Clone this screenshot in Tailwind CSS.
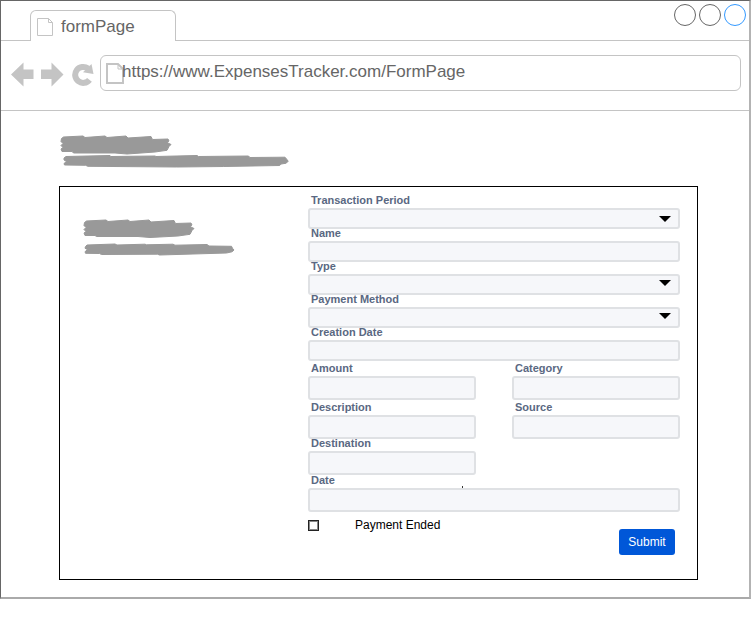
<!DOCTYPE html>
<html lang="en">
<head>
<meta charset="utf-8">
<title>formPage</title>
<script src="https://cdn.jsdelivr.net/npm/@tailwindcss/browser@4"></script>
</head>
<body class="bg-white font-['Liberation_Sans',Arial,sans-serif]">
<div class="border border-[#666] border-r-2 border-r-[#b3b3b3] border-b-2 border-b-[#aaa] pb-[17px]">

  <!-- Tab strip -->
  <header class="flex items-end justify-between border-b border-[#c4c4c4] pl-[29px] pr-[3px] pt-[3px] h-10">
    <div class="-mb-px flex h-[31px] w-[146px] items-center gap-[7px] rounded-t-md border border-b-0 border-[#c4c4c4] bg-white pl-[6px] pt-px">
      <svg class="h-5 w-[17px]" viewBox="0 0 17 20" fill="none" stroke="#c4c4c4" aria-hidden="true"><path d="M.5 1.5h11l4 4v13H.5zM11.500 1.500v4h4"/></svg>
      <span class="text-[17px] leading-5 text-[#666]">formPage</span>
    </div>
    <div class="flex gap-[3px] self-start">
      <button aria-label="Minimize" class="size-[22px] rounded-full border border-[#666]"></button>
      <button aria-label="Maximize" class="size-[22px] rounded-full border border-[#666]"></button>
      <button aria-label="Close" class="size-[22px] rounded-full border border-[#3399ff]"></button>
    </div>
  </header>

  <!-- Navigation bar -->
  <nav class="flex items-start border-b border-[#c4c4c4] pb-[19px] pl-[10px] pr-2 pt-[14px]">
    <button aria-label="Back" class="mt-[7px]"><svg class="h-[25px] w-[23px]" viewBox="0 0 23 25" fill="#c4c4c4"><path d="M0 12.500 12.500 .5v7h10v9.500h-10V24.500z"/></svg></button>
    <button aria-label="Forward" class="ml-[7px] mt-[7px]"><svg class="h-[25px] w-[23px]" viewBox="0 0 23 25" fill="#c4c4c4"><path d="M22.500 12.500 10.500 .5v7H0V17h10.500v7.500z"/></svg></button>
    <button aria-label="Reload" class="ml-2 mt-2"><svg class="h-[23px] w-[22px]" viewBox="0 0 22 23"><path d="M16 5.500A8 8 0 1 0 17.500 16.800" fill="none" stroke="#c4c4c4" stroke-width="6"/><path d="m19.500 1 2 10-10.500-1.800z" fill="#c4c4c4"/></svg></button>
    <div class="ml-[6px] flex h-9 flex-1 items-start rounded-md border border-[#c4c4c4] pl-[5px]">
      <svg class="mt-[7px] h-[21px] w-[18px]" viewBox="0 0 18 21" fill="none" stroke="#c4c4c4" stroke-width="2" aria-hidden="true"><path d="M1 1h11l5 5v14H1z"/><path d="M12 1v5h5" stroke-width="1"/></svg>
      <input aria-label="Address" value="https://www.ExpensesTracker.com/FormPage" class="-ml-[2px] mt-[6px] h-5 min-w-0 flex-1 bg-transparent text-[17px] leading-5 text-[#666] outline-none">
    </div>
  </nav>

  <main class="pl-[58px] pr-[51px] pt-6">
    <svg class="ml-px h-[32px] w-[230px] overflow-visible" viewBox="0 0 230 32" fill="#999" stroke="#999" stroke-linejoin="round" aria-label="Page heading" role="img">
      <path d="M1.500 3.500 3.500 2 23 1l2 1.500L45 1l2 1.500L66 1l2 2 23-1.500 1.500 3L108 4l1 2-2 1.500 4 2-2 2-2 3.800L95 17l-28 2-12-1H13.500L12 16.500H2L1 14l2-1.500L1 10.500l2-2-2-2z"/>
      <path d="m4 23 2-1.500 44-1 1 1 44-.5 1 .5 41-1 1.500 1 50-.5 1.500 1.500 35-.3 1.700 2 1.500 2-2 2-5 .8-1.500 1.500-56 1-47 .5-89-.7-2-1L4.500 30l-.5-1.500L6.500 26.500 4 25z"/>
    </svg>

    <section class="mt-[19px] flex border border-black pb-6 pr-[17px] pt-[9px]">
      <div class="w-[248px] shrink-0 pl-[23px] pt-[23px]">
        <svg class="h-9 w-[152px] overflow-visible" viewBox="0 0 152 36" fill="#999" stroke="#999" stroke-linejoin="round" aria-label="Form heading" role="img">
          <path d="M1.500 3.500 3.500 2 23 1l2 1.500L45 1l2 1.500L66 1l2 2 23-1.500 1.500 3L108 4l1 2-2 1.500 4 2-2 2-2 3.800L95 17l-28 1.500-12-1H13.500L12 16.500H2L1 14l2-1.500L1 10.500l2-2-2-2z"/>
          <path d="m2.500 27.500 1.500-1.500 28-1 2 1 28-.8 1.500.6 26.500-.6 2 1 32-.7 2 1.500 22.500.3 1 2 1.500 1.700-2 1.800-5.500 1.200-67 2-2-.8-56 .3-2-1-14-.2-.5-1.600 2.500-2-2.500-1.500z"/>
        </svg>
      </div>

      <form class="min-w-0 flex-1 text-[11px] leading-[9px] text-[#5a6882]">
        <div class="flex flex-col font-bold">
          <label for="period" class="pb-[3px] pl-[3px]">Transaction Period</label>
          <div class="relative h-[21px]">
            <select id="period" class="block h-full w-full appearance-none rounded-[3px] border-2 border-[#dfe1e4] bg-[#f6f7fa]"></select>
            <svg class="pointer-events-none absolute right-[9px] top-2 h-[6px] w-3" viewBox="0 0 12 6"><path d="M0 0h12L6 6z"/></svg>
          </div>
          <label for="name" class="pb-[3px] pl-[3px]">Name</label>
          <input id="name" class="h-[21px] w-full rounded-[3px] border-2 border-[#dfe1e4] bg-[#f6f7fa]">
          <label for="type" class="pb-[3px] pl-[3px]">Type</label>
          <div class="relative h-[21px]">
            <select id="type" class="block h-full w-full appearance-none rounded-[3px] border-2 border-[#dfe1e4] bg-[#f6f7fa]"></select>
            <svg class="pointer-events-none absolute right-[9px] top-[6px] h-[6px] w-3" viewBox="0 0 12 6"><path d="M0 0h12L6 6z"/></svg>
          </div>
          <label for="method" class="pb-[3px] pl-[3px]">Payment Method</label>
          <div class="relative h-[21px]">
            <select id="method" class="block h-full w-full appearance-none rounded-[3px] border-2 border-[#dfe1e4] bg-[#f6f7fa]"></select>
            <svg class="pointer-events-none absolute right-[9px] top-[6px] h-[6px] w-3" viewBox="0 0 12 6"><path d="M0 0h12L6 6z"/></svg>
          </div>
          <label for="created" class="pb-[3px] pl-[3px]">Creation Date</label>
          <input id="created" class="h-[21px] w-full rounded-[3px] border-2 border-[#dfe1e4] bg-[#f6f7fa]">
        </div>

        <div class="mt-[3px] grid grid-cols-2 gap-x-9 gap-y-[3px] font-bold">
          <div class="flex flex-col">
            <label for="amount" class="pb-[3px] pl-[3px]">Amount</label>
            <input id="amount" class="h-6 w-full rounded-[3px] border-2 border-[#dfe1e4] bg-[#f6f7fa]">
          </div>
          <div class="flex flex-col">
            <label for="category" class="pb-[3px] pl-[3px]">Category</label>
            <input id="category" class="h-6 w-full rounded-[3px] border-2 border-[#dfe1e4] bg-[#f6f7fa]">
          </div>
          <div class="flex flex-col">
            <label for="description" class="pb-[3px] pl-[3px]">Description</label>
            <input id="description" class="h-6 w-full rounded-[3px] border-2 border-[#dfe1e4] bg-[#f6f7fa]">
            <label for="destination" class="pb-[3px] pl-[3px]">Destination</label>
            <input id="destination" class="h-6 w-full rounded-[3px] border-2 border-[#dfe1e4] bg-[#f6f7fa]">
          </div>
          <div class="flex flex-col">
            <label for="source" class="pb-[3px] pl-[3px]">Source</label>
            <input id="source" class="h-6 w-full rounded-[3px] border-2 border-[#dfe1e4] bg-[#f6f7fa]">
          </div>
        </div>

        <div class="relative mt-px flex flex-col font-bold">
          <label for="date" class="pb-[3px] pl-[3px]">Date</label>
          <input id="date" class="h-6 w-full rounded-[3px] border-2 border-[#dfe1e4] bg-[#f6f7fa]">
          <span class="absolute left-[154px] top-[10px] h-[2px] w-px bg-[#333]"></span>
        </div>

        <div class="flex justify-between pr-[5px]">
          <div class="flex items-center self-start pt-[6px]">
            <input id="ended" type="checkbox" class="size-[11px] appearance-none border border-[#222] bg-white outline-1 -outline-offset-2 outline-[#888] checked:bg-[#444]">
            <label for="ended" class="pl-9 text-xs leading-[14px] text-black">Payment Ended</label>
          </div>
          <button type="submit" class="mt-[17px] h-[26px] w-14 rounded-[3px] bg-[#0057d8] text-xs text-white">Submit</button>
        </div>
      </form>
    </section>
  </main>
</div>
</body>
</html>
